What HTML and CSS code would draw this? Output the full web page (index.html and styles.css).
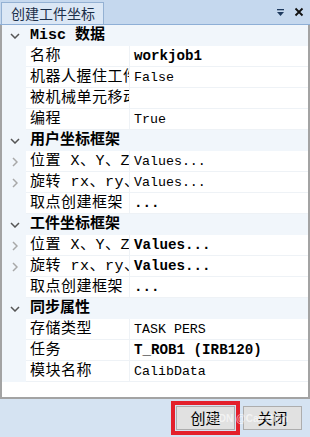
FILE: index.html
```html
<!DOCTYPE html>
<html lang="zh-CN">
<head>
    <meta charset="UTF-8">
    <meta name="viewport" content="width=device-width, initial-scale=1.0">
    <title>创建工件坐标</title>
    <link rel="stylesheet" href="styles.css">
</head>
<body>
    <div class="window">
        <div class="titlebar">
            <div class="tab">创建工件坐标</div>
            <div class="tools">
                <svg class="tool" width="9" height="9" viewBox="0 0 9 9"><rect x="1" y="1" width="7" height="1.3" fill="#1e3a5f"/><polygon points="1,4 8,4 4.5,8" fill="#1e3a5f"/></svg>
                <svg class="tool" width="10" height="10" viewBox="0 0 10 10"><path d="M1.5 1.5 L8.5 8.5 M8.5 1.5 L1.5 8.5" stroke="#111" stroke-width="1.8"/></svg>
            </div>
        </div>

        <div class="grid">
            <div class="row cat">
                <span class="exp"><svg width="10" height="6" viewBox="0 0 10 6"><polyline points="1,1 5,5 9,1" fill="none" stroke="#555" stroke-width="1.5"/></svg></span>
                <span class="cat-name">Misc 数据</span>
            </div>
            <div class="row"><span class="exp"></span><span class="name">名称</span><span class="value value--bold">workjob1</span></div>
            <div class="row"><span class="exp"></span><span class="name">机器人握住工件</span><span class="value">False</span></div>
            <div class="row"><span class="exp"></span><span class="name">被机械单元移动</span><span class="value"></span></div>
            <div class="row"><span class="exp"></span><span class="name">编程</span><span class="value">True</span></div>

            <div class="row cat">
                <span class="exp"><svg width="10" height="6" viewBox="0 0 10 6"><polyline points="1,1 5,5 9,1" fill="none" stroke="#555" stroke-width="1.5"/></svg></span>
                <span class="cat-name">用户坐标框架</span>
            </div>
            <div class="row"><span class="exp"><svg width="6" height="10" viewBox="0 0 6 10"><polyline points="1,1 5,5 1,9" fill="none" stroke="#a8a8a8" stroke-width="1.5"/></svg></span><span class="name">位置 X、Y、Z</span><span class="value">Values...</span></div>
            <div class="row"><span class="exp"><svg width="6" height="10" viewBox="0 0 6 10"><polyline points="1,1 5,5 1,9" fill="none" stroke="#a8a8a8" stroke-width="1.5"/></svg></span><span class="name">旋转 rx、ry、rz</span><span class="value">Values...</span></div>
            <div class="row"><span class="exp"></span><span class="name">取点创建框架</span><span class="value value--bold">...</span></div>

            <div class="row cat">
                <span class="exp"><svg width="10" height="6" viewBox="0 0 10 6"><polyline points="1,1 5,5 9,1" fill="none" stroke="#555" stroke-width="1.5"/></svg></span>
                <span class="cat-name">工件坐标框架</span>
            </div>
            <div class="row"><span class="exp"><svg width="6" height="10" viewBox="0 0 6 10"><polyline points="1,1 5,5 1,9" fill="none" stroke="#a8a8a8" stroke-width="1.5"/></svg></span><span class="name">位置 X、Y、Z</span><span class="value value--bold">Values...</span></div>
            <div class="row"><span class="exp"><svg width="6" height="10" viewBox="0 0 6 10"><polyline points="1,1 5,5 1,9" fill="none" stroke="#a8a8a8" stroke-width="1.5"/></svg></span><span class="name">旋转 rx、ry、rz</span><span class="value value--bold">Values...</span></div>
            <div class="row"><span class="exp"></span><span class="name">取点创建框架</span><span class="value value--bold">...</span></div>

            <div class="row cat">
                <span class="exp"><svg width="10" height="6" viewBox="0 0 10 6"><polyline points="1,1 5,5 9,1" fill="none" stroke="#555" stroke-width="1.5"/></svg></span>
                <span class="cat-name">同步属性</span>
            </div>
            <div class="row"><span class="exp"></span><span class="name">存储类型</span><span class="value">TASK PERS</span></div>
            <div class="row"><span class="exp"></span><span class="name">任务</span><span class="value value--bold">T_ROB1 (IRB120)</span></div>
            <div class="row"><span class="exp"></span><span class="name">模块名称</span><span class="value">CalibData</span></div>
        </div>

        <div class="footer">
            <button class="btn btn--marked">创建</button>
            <button class="btn">关闭</button>
            <span class="watermark">CSDN @Cavyhon</span>
        </div>
    </div>
</body>
</html>
```

FILE: styles.css
```css
/* Fenêtre */
body { margin: 0; font-family: "Noto Sans CJK SC", sans-serif; }
.window {
    width: 310px;
    height: 437px;
    display: flex;
    flex-direction: column;
    background: #d5e3f2;
    position: relative;
    overflow: hidden;
}

/* Barre de titre */
.titlebar {
    height: 24px;
    display: flex;
    align-items: flex-end;
    justify-content: space-between;
    background: #c5d8ee;
    border-bottom: 1px solid #8eafd6;
}
.tab {
    height: 21px;
    margin-left: 1px;
    padding: 0 8px 0 9px;
    background: #dbe7f5;
    border: 1px solid #94b1d3;
    border-bottom: none;
    font-size: 14px;
    line-height: 21px;
    color: #1b2f4a;
}
.tools {
    display: flex;
    align-items: center;
    gap: 9px;
    height: 24px;
    padding-right: 6px;
}

/* Grille de propriétés */
.grid {
    height: 372px;
    background: #fff;
    border: 2px solid #a3a3a3;
    border-top: none;
    font-family: "Liberation Mono", "Noto Sans CJK SC", monospace;
}
.row {
    display: grid;
    grid-template-columns: 24px 104px 1fr;
    height: 21px;
}
.exp {
    display: flex;
    align-items: center;
    justify-content: center;
    background: #f1f6fb;
    padding-left: 1px;
}
.name, .value {
    min-width: 0;
    font-size: 15px;
    line-height: 19px;
    padding-top: 1px;
    white-space: nowrap;
    overflow: hidden;
    border-bottom: 1px solid #eef2f6;
    color: #000;
}
.name {
    padding-left: 4px;
    border-right: 1px solid #eef2f6;
    letter-spacing: 0.5px;
}
.value {
    padding-left: 4px;
    font-size: 13.3px;
}
.value--bold { font-weight: bold; font-size: 14.2px; }

.cat { background: #f1f6fb; }
.cat .exp { padding-left: 2px; }
.cat-name {
    grid-column: 2 / 4;
    padding-left: 4px;
    font-size: 15px;
    font-weight: bold;
    line-height: 21px;
}

/* Boutons */
.footer {
    flex: 1;
    display: flex;
    justify-content: flex-end;
    align-items: flex-start;
    gap: 8px;
    padding: 7px 8px 0;
}
.btn {
    width: 59px;
    height: 24px;
    padding: 0;
    background: #e1e1e1;
    border: 1px solid #adadad;
    font-family: "Noto Sans CJK SC", sans-serif;
    font-size: 15px;
    line-height: 20px;
    color: #000;
}
.btn--marked {
    outline: 4px solid #e3202b;
    outline-offset: 1px;
}
.watermark {
    position: absolute;
    right: 22px;
    bottom: 13px;
    font-family: "Liberation Sans", sans-serif;
    font-size: 10px;
    font-weight: bold;
    color: rgba(255,255,255,0.6);
}
```
